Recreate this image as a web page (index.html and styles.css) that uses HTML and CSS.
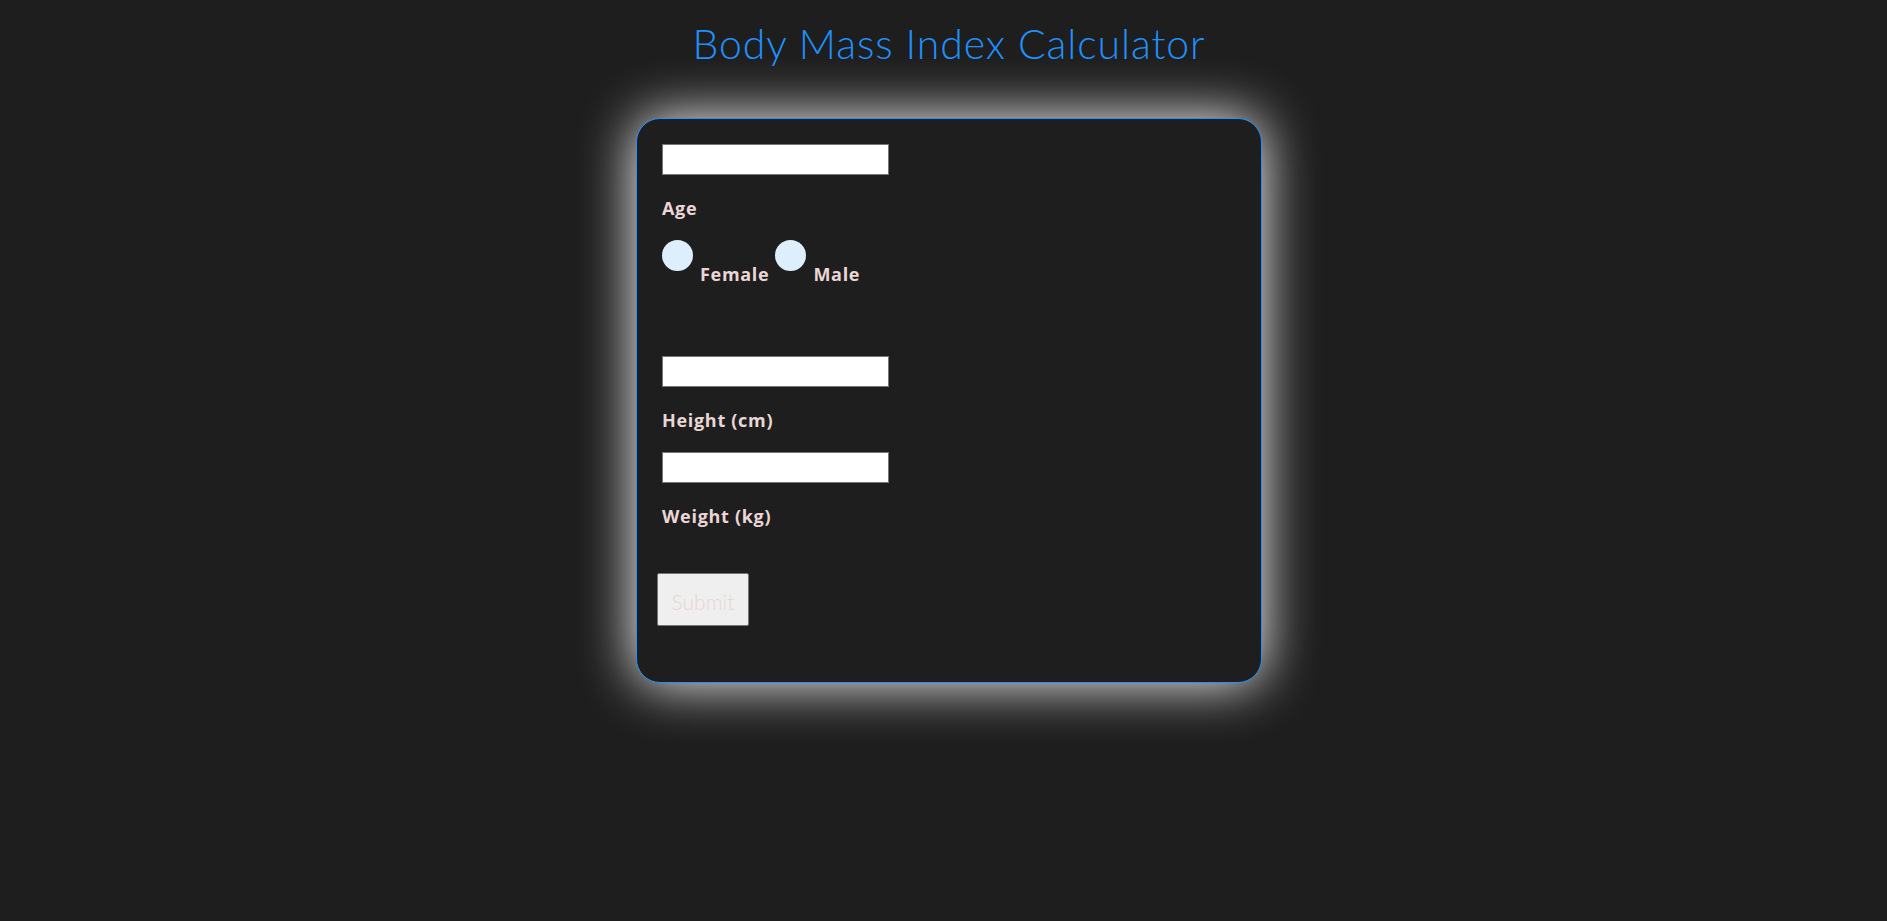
FILE: index.html
```html
<!DOCTYPE html>
<html lang="en">
<head>
<meta charset="utf-8">
<title>BMI Calculator</title>
<link rel="stylesheet" href="styles.css">
</head>
<body>
<h1 class="title">Body Mass Index Calculator</h1>
<form class="card">
  <input class="field" type="text">
  <label class="lbl">Age</label>
  <div class="gender">
    <input class="radio" type="radio" name="g" id="f">
    <label class="lbl opt" for="f">Female</label>
    <input class="radio" type="radio" name="g" id="m">
    <label class="lbl opt" for="m">Male</label>
  </div>
  <input class="field" type="text">
  <label class="lbl">Height (cm)</label>
  <input class="field" type="text">
  <label class="lbl">Weight (kg)</label>
  <button class="submit" type="button">Submit</button>
</form>
</body>
</html>
```
FILE: styles.css
```css
html, body {
  margin: 0;
  background: #1e1e1e;
}
body {
  padding: 23px 0 0 11px;
  font-family: "Lato", "Open Sans", sans-serif;
  min-height: 921px;
  box-sizing: border-box;
}
.title {
  margin: 0 0 54px;
  font-size: 41px;
  line-height: 41px;
  font-weight: 300;
  letter-spacing: 0.9px;
  color: #1e90ff;
  text-align: center;
}
.card {
  box-sizing: border-box;
  width: 626px;
  margin: 0 auto;
  padding: 25px 25px 56px;
  border: 1px solid #1e90ff;
  border-radius: 24px;
  background: #1e1e1e;
  box-shadow: 0 0 55px #ffffff;
  display: flex;
  flex-direction: column;
  align-items: flex-start;
}
.field {
  box-sizing: border-box;
  width: 227px;
  height: 31px;
  margin: 0;
  border: 1px solid #767676;
  background: #fff;
  outline: none;
}
.lbl {
  display: block;
  margin-top: 24px;
  font-family: "Open Sans", "Lato", sans-serif;
  font-size: 18px;
  line-height: 18px;
  font-weight: 700;
  letter-spacing: 0.7px;
  color: #ead6d6;
}
.card > .lbl + .field {
  margin-top: 23px;
}
.gender {
  display: flex;
  align-items: flex-start;
  margin: 23px 0 73px;
}
.radio {
  appearance: none;
  -webkit-appearance: none;
  width: 31px;
  height: 31px;
  margin: 0;
  border-radius: 50%;
  background: #ddeefc;
  border: none;
}
.opt {
  margin: 25px 6px 0 7px;
}
.submit {
  margin: 48px 0 0 -5px;
  width: 92px;
  height: 53px;
  background: #efefef;
  border: 1px solid #767676;
  border-radius: 2px;
  font-family: "Lato", "Open Sans", sans-serif;
  font-size: 21px;
  font-weight: 300;
  color: #e9d4d4;
  padding: 3px 0 0;
}
```
